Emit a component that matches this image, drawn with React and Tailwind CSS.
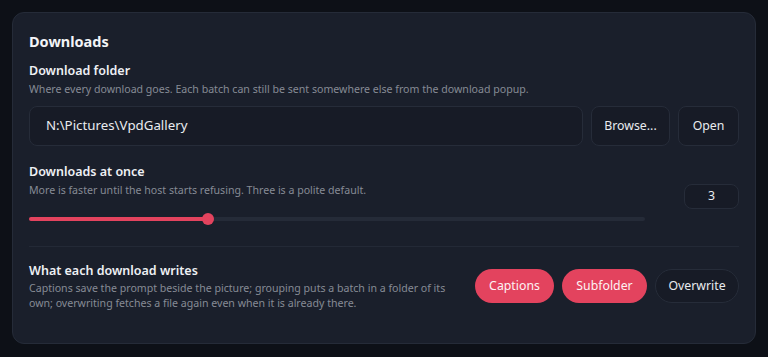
export default function App() {
  const font = { fontFamily: '"Noto Sans", "Open Sans", sans-serif' };
  return (
    <div className="min-h-screen w-full bg-[#0d1017] p-3" style={font}>
      <div className="flex h-[332px] w-[744px] flex-col rounded-xl border border-[#252b38] bg-[#1a1f2b] px-4 pt-4">
        <h2 className="text-[14.5px] font-bold leading-6 text-[#f3f4f7]">Downloads</h2>

        <div className="mt-2 text-[12.5px] font-semibold leading-5 text-[#eef0f4]">Download folder</div>
        <div className="text-[10.6px] leading-4 text-[#868b95]">
          Where every download goes. Each batch can still be sent somewhere else from the download popup.
        </div>
        <div className="mt-[9px] flex h-10 gap-2">
          <div className="flex flex-1 items-center rounded-lg border border-[#262c39] bg-[#171b26] px-4 text-[13.3px] text-[#e9ebef]">
            N:\Pictures\VpdGallery
          </div>
          <button className="w-[79px] rounded-lg border border-[#262c39] bg-[#171b26] text-[12.3px] text-[#e9ebef]">
            Browse...
          </button>
          <button className="w-[61px] rounded-lg border border-[#262c39] bg-[#171b26] text-[12.3px] text-[#e9ebef]">
            Open
          </button>
        </div>

        <div className="mt-4 flex items-center gap-[39px]">
          <div className="flex-1">
            <div className="text-[12.5px] font-semibold leading-5 text-[#eef0f4]">Downloads at once</div>
            <div className="text-[10.6px] leading-4 text-[#868b95]">
              More is faster until the host starts refusing. Three is a polite default.
            </div>
            <div className="relative mt-[15px] h-3">
              <div className="absolute left-0 right-0 top-1 h-1 rounded-full bg-[#252b38]" />
              <div className="absolute left-0 top-1 h-1 w-[179px] rounded-full bg-[#e3435e]" />
              <div className="absolute left-[173px] top-0 h-3 w-3 rounded-full bg-[#e3435e]" />
            </div>
          </div>
          <div className="mt-[6px] flex h-[25px] w-[55px] items-center justify-center rounded-lg border border-[#262c39] bg-[#171b26] text-[12.3px] text-[#e9ebef]">
            3
          </div>
        </div>

        <div className="mt-[21px] h-px bg-[#232936]" />

        <div className="mt-[14px] flex items-center justify-between">
          <div className="w-[425px]">
            <div className="text-[12.5px] font-semibold leading-5 text-[#eef0f4]">What each download writes</div>
            <div className="text-[10.6px] leading-[15px] text-[#868b95]">
              Captions save the prompt beside the picture; grouping puts a batch in a folder of its own; overwriting fetches a file again even when it is already there.
            </div>
          </div>
          <div className="flex gap-2">
            <button className="h-[34px] w-[79px] rounded-full bg-[#e3435e] text-[12.3px] text-[#fdf2f4]">Captions</button>
            <button className="h-[34px] w-[85px] rounded-full bg-[#e3435e] text-[12.3px] text-[#fdf2f4]">Subfolder</button>
            <button className="h-[34px] w-[84px] rounded-full border border-[#262c39] bg-[#171b26] text-[12.3px] text-[#e9ebef]">Overwrite</button>
          </div>
        </div>
      </div>
    </div>
  );
}
